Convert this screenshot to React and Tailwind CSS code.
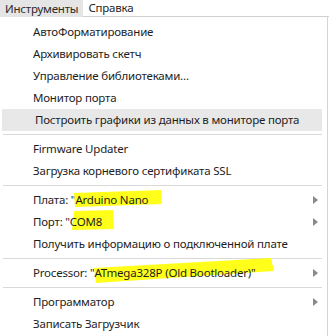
import React from "react";

const font = { fontFamily: '"Noto Sans", "Open Sans", sans-serif' };

function Arrow() {
  return (
    <svg width="5" height="8" viewBox="0 0 5 8" className="absolute right-[9px] top-1/2 -translate-y-1/2">
      <path d="M0 0 L5 4 L0 8 Z" fill="#8a8a8a" />
    </svg>
  );
}

function Item({ children, hover, sub }) {
  return (
    <div className={`relative h-[22px] flex items-center pl-[33px] ${hover ? "bg-[#e8e8e8] mx-[2px] pl-[31px] mr-[5px]" : ""}`}>
      <span className="whitespace-nowrap">{children}</span>
      {sub && <Arrow />}
    </div>
  );
}

function Sep() {
  return (
    <div className="h-[7px] flex items-center pl-[3px] pr-[5px]">
      <div className="h-px w-full bg-[#d9d9d9]" />
    </div>
  );
}

function Mark({ children, path, w, h, l, t }) {
  return (
    <span className="relative inline-block">
      <svg
        className="absolute pointer-events-none"
        style={{ left: l, top: t }}
        width={w}
        height={h}
        viewBox={`0 0 ${w} ${h}`}
      >
        <path d={path} fill="#ffff1a" />
      </svg>
      <span className="relative">{children}</span>
    </span>
  );
}

export default function App() {
  return (
    <div className="w-[329px] h-[336px] bg-white text-[11.5px] tracking-[-0.2px] text-[#1e1e1e] overflow-hidden" style={font}>
      <div className="flex h-[17px] items-center">
        <div className="h-full bg-[#e5e5e5] px-[5px] flex items-center text-[#2a2a2a]">Инструменты</div>
        <div className="h-full px-[5px] flex items-center border-b border-[#d0d0d0] flex-1">Справка</div>
      </div>
      <div className="border-r border-[#d4d4d4] w-[328px] pt-[4px] h-[319px]">
        <Item>АвтоФорматирование</Item>
        <Item>Архивировать скетч</Item>
        <Item>Управление библиотеками...</Item>
        <Item>Монитор порта</Item>
        <Item hover>Построить графики из данных в мониторе порта</Item>
        <Sep />
        <Item>Firmware Updater</Item>
        <Item>Загрузка корневого сертификата SSL</Item>
        <Sep />
        <Item sub>
          Плата: "
          <Mark w={90} h={20} l={-2} t={-2} path="M1 4 L88 1 L89 15 L2 18 Z">Arduino Nano</Mark>"
        </Item>
        <Item sub>
          Порт: "
          <Mark w={44} h={22} l={1} t={-4} path="M3 2 L42 1 L43 20 L1 21 Z">COM8</Mark>"
        </Item>
        <Item>Получить информацию о подключенной плате</Item>
        <Sep />
        <Item sub>
          Processor: "
          <Mark w={182} h={26} l={-2} t={-6} path="M1 10 L178 0 L181 13 L3 25 Z">ATmega328P (Old Bootloader)"</Mark>
        </Item>
        <Sep />
        <Item sub>Программатор</Item>
        <Item>Записать Загрузчик</Item>
      </div>
    </div>
  );
}
